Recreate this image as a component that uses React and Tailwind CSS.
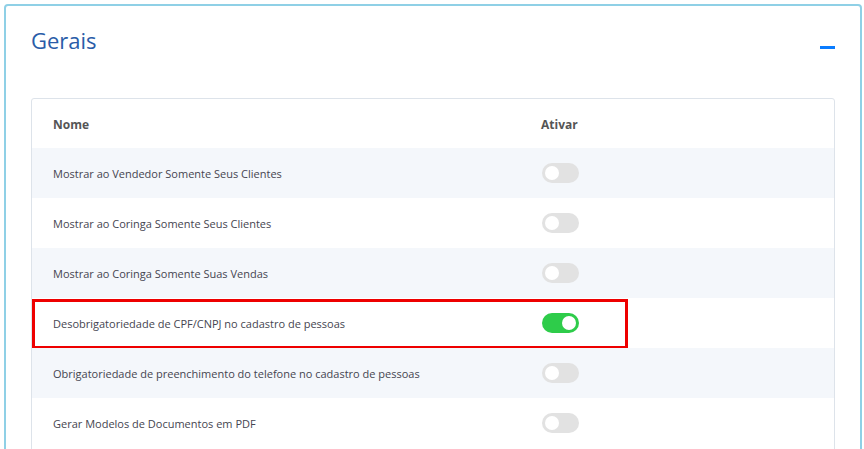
import React, { useState } from 'react';

const rows = [
  { name: 'Mostrar ao Vendedor Somente Seus Clientes', on: false },
  { name: 'Mostrar ao Coringa Somente Seus Clientes', on: false },
  { name: 'Mostrar ao Coringa Somente Suas Vendas', on: false },
  { name: 'Desobrigatoriedade de CPF/CNPJ no cadastro de pessoas', on: true, marked: true },
  { name: 'Obrigatoriedade de preenchimento do telefone no cadastro de pessoas', on: false },
  { name: 'Gerar Modelos de Documentos em PDF', on: false },
];

function Toggle({ on, onClick }) {
  return (
    <button
      onClick={onClick}
      className={`flex h-[20px] w-[37px] items-center rounded-full px-[3px] ${on ? 'justify-end bg-[#2ecc4a]' : 'justify-start bg-[#e2e2e2]'}`}
    >
      <span className="block h-[14px] w-[14px] rounded-full bg-white" />
    </button>
  );
}

export default function App() {
  const [items, setItems] = useState(rows);

  const flip = (i) => {
    setItems((s) => s.map((r, j) => (j === i ? { ...r, on: !r.on } : r)));
  };

  return (
    <div className="h-[449px] overflow-hidden bg-white font-['Open_Sans',sans-serif]">
      <div className="ml-[4px] mt-[4px] w-[858px] rounded-[4px] border-2 border-[#8fd0e6] px-[25px] pt-[19px]">
        <div className="flex items-start justify-between">
          <h2 className="text-[22px] leading-[30px] font-normal text-[#2a5ca8]">Gerais</h2>
          <span className="mt-[21px] block h-[3px] w-[15px] bg-[#0a7cff]" />
        </div>

        <div className="mt-[43px] rounded-t-[3px] border border-[#dde3ea] pb-[12px]">
          <div className="flex h-[49px] items-center text-[12px] font-bold text-[#555]">
            <div className="w-[509px] pl-[21px] pt-[3px]">Nome</div>
            <div className="pt-[3px]">Ativar</div>
          </div>
          {items.map((r, i) => (
            <div
              key={r.name}
              className={`relative flex h-[50px] items-center text-[11px] text-[#454550] ${i % 2 === 0 ? 'bg-[#f4f7fb]' : 'bg-white'}`}
            >
              <div className="w-[510px] pl-[21px] pt-[3px]">{r.name}</div>
              <Toggle on={r.on} onClick={() => flip(i)} />
              {r.marked && (
                <div className="pointer-events-none absolute left-0 top-[1px] h-[50px] w-[596px] border-[3px] border-[#ee0000]" />
              )}
            </div>
          ))}
        </div>
      </div>
    </div>
  );
}
